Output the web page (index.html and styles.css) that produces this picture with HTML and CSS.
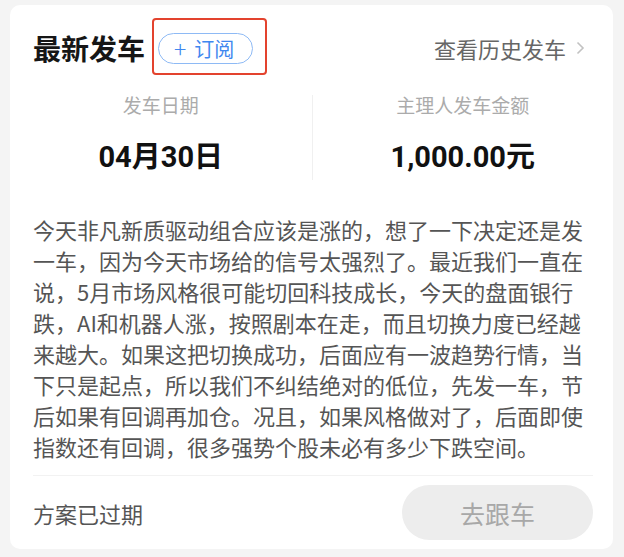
FILE: index.html
```html
<!DOCTYPE html>
<html lang="zh-CN">
<head>
  <meta charset="UTF-8">
  <title>最新发车</title>
  <link rel="stylesheet" href="styles.css">
</head>
<body>

<div class="card">
  <div class="card-header">
    <h2 class="title">最新发车</h2>
    <span class="subscribe"><span class="plus">+</span>订阅</span>
    <a class="history" href="#">查看历史发车
      <svg class="chevron" width="9" height="14" viewBox="0 0 9 14"><polyline points="1.5,1.5 7,7 1.5,12.5" fill="none" stroke="#c2c2c2" stroke-width="1.6"/></svg>
    </a>
  </div>

  <div class="stats">
    <div class="stat">
      <div class="stat-label">发车日期</div>
      <div class="stat-value">04月30日</div>
    </div>
    <div class="stat">
      <div class="stat-label">主理人发车金额</div>
      <div class="stat-value">1,000.00元</div>
    </div>
  </div>

  <p class="desc">今天非凡新质驱动组合应该是涨的，想了一下决定还是发一车，因为今天市场给的信号太强烈了。最近我们一直在说，5月市场风格很可能切回科技成长，今天的盘面银行跌，AI和机器人涨，按照剧本在走，而且切换力度已经越来越大。如果这把切换成功，后面应有一波趋势行情，当下只是起点，所以我们不纠结绝对的低位，先发一车，节后如果有回调再加仓。况且，如果风格做对了，后面即使指数还有回调，很多强势个股未必有多少下跌空间。</p>

  <div class="card-footer">
    <span class="status">方案已过期</span>
    <button class="follow" disabled>去跟车</button>
  </div>
</div>

</body>
</html>
```

FILE: styles.css
```css
body {
  margin: 0;
  background-color: #f4f4f4;
  font-family: "Noto Sans CJK SC", sans-serif;
}
.card {
  width: 603px;
  height: 544px;
  margin: 5px 0 0 10px;
  background-color: #fff;
  border-radius: 10px;
  box-sizing: border-box;
  padding-top: 26px;
}
.card-header {
  display: flex;
  align-items: center;
  height: 34px;
  padding: 0 28px 0 23px;
}
.title {
  margin: 0;
  font-size: 28px;
  line-height: 34px;
  font-weight: bold;
  color: #161616;
}
.subscribe {
  position: relative;
  display: flex;
  align-items: center;
  height: 31px;
  box-sizing: border-box;
  margin-left: 13px;
  padding: 0 18px 0 15px;
  border: 1px solid #8ebaf5;
  border-radius: 16px;
  font-size: 20px;
  color: #3f87ef;
}
.subscribe .plus {
  font-size: 23px;
  font-weight: 300;
  line-height: 1;
  margin-right: 8px;
}
/* annotation box drawn over the pill */
.subscribe::after {
  content: "";
  position: absolute;
  left: -7px;
  top: -16px;
  width: 115px;
  height: 57px;
  box-sizing: border-box;
  border: 2px solid #e3432e;
  border-radius: 4px;
}
.history {
  margin-left: auto;
  display: flex;
  align-items: center;
  font-size: 22px;
  color: #666;
  text-decoration: none;
}
.chevron {
  margin-left: 10px;
}
.stats {
  display: grid;
  grid-template-columns: 1fr 1fr;
  margin-top: 30px;
}
.stat {
  text-align: center;
  padding-bottom: 5px;
}
.stat + .stat {
  border-left: 1px solid #f0f0f0;
}
.stat-label {
  font-size: 19px;
  line-height: 20px;
  color: #ababab;
}
.stat-value {
  margin-top: 24px;
  font-family: Roboto, "Noto Sans CJK SC", sans-serif;
  font-size: 29px;
  line-height: 36px;
  font-weight: bold;
  color: #111;
}
.desc {
  margin: 34px 0 0;
  padding: 0 24px 0 23px;
  font-size: 22px;
  line-height: 31px;
  color: #555;
  height: 248px;
}
.card-footer {
  display: flex;
  justify-content: space-between;
  align-items: center;
  margin: 13px 20px 0 23px;
  padding-top: 9px;
  border-top: 1px solid #f2f2f2;
}
.status {
  font-size: 22px;
  color: #555;
}
.follow {
  width: 191px;
  height: 55px;
  border: none;
  border-radius: 28px;
  background-color: #ededed;
  color: #a8a8a8;
  font-family: "Noto Sans CJK SC", sans-serif;
  font-size: 25px;
}
```
